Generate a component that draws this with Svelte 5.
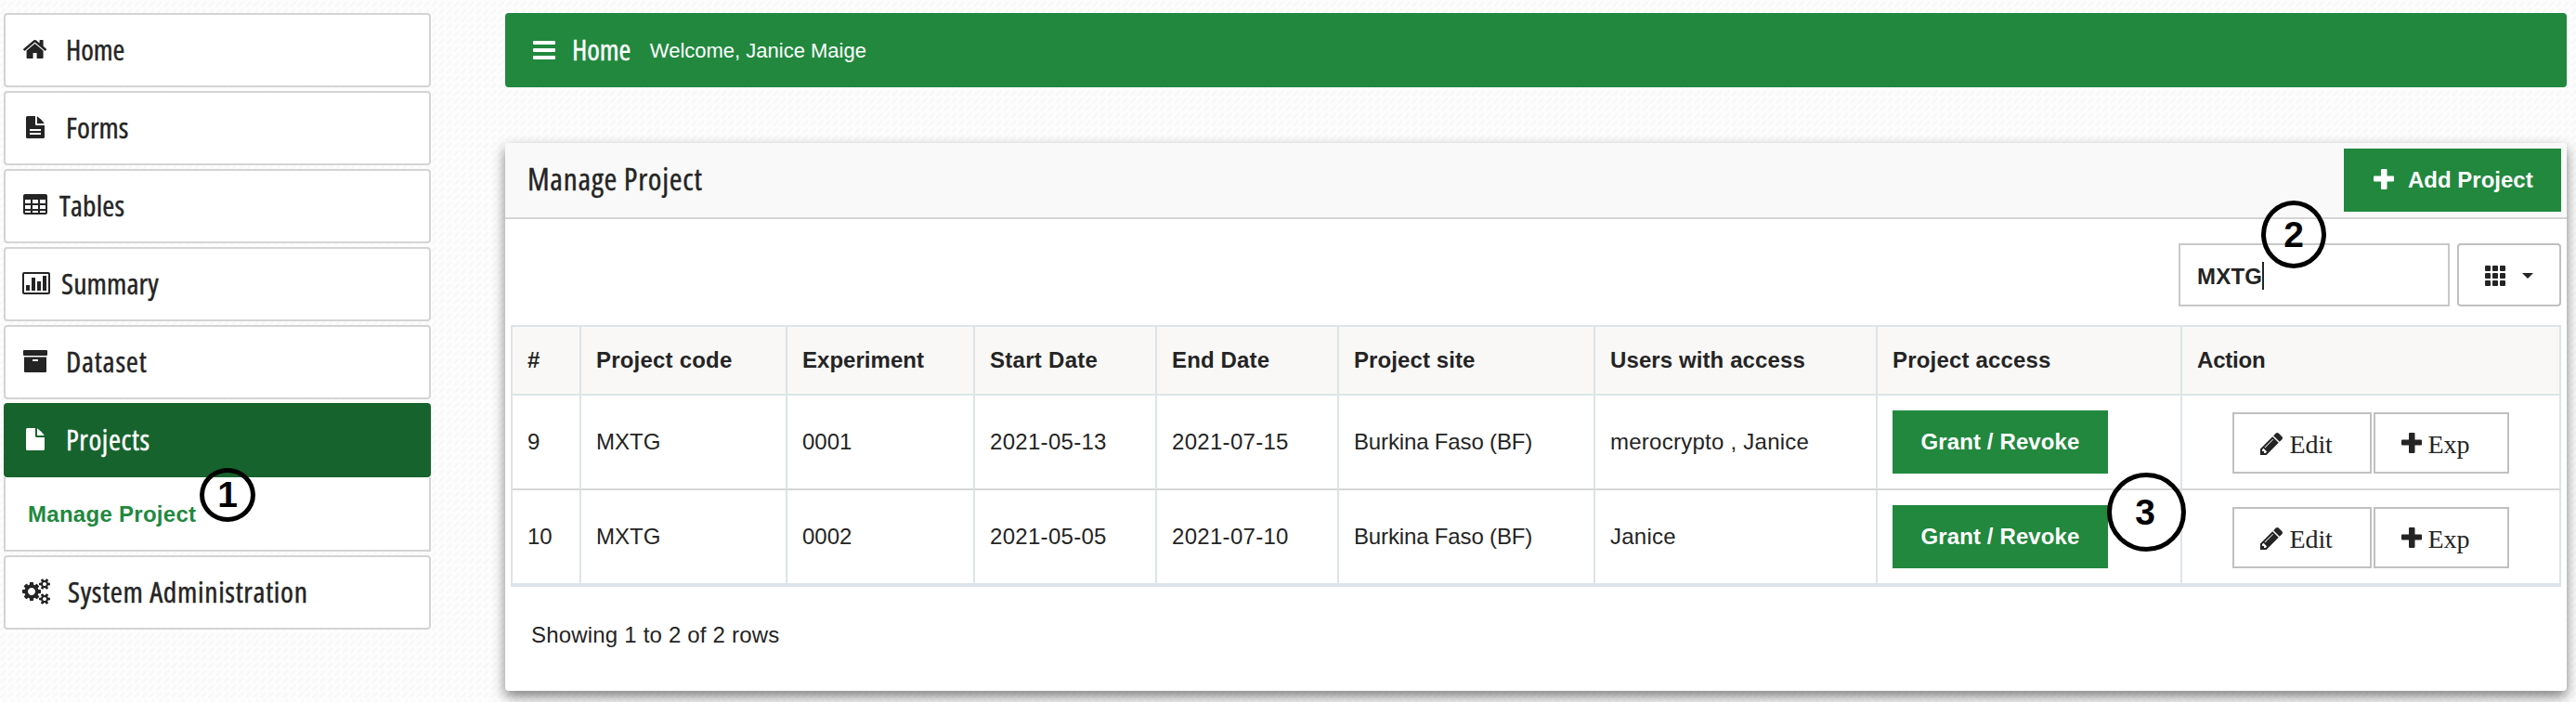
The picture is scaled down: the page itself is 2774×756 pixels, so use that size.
<script>
  const menu = [
    { icon: 'home', label: 'Home', gap: 16.5, scale: 1.03, ls: -0.1 },
    { icon: 'form', label: 'Forms', gap: 16.5, scale: 1.05, ls: 0.1 },
    { icon: 'table', label: 'Tables', gap: 10, scale: 1.045, ls: 0.2 },
    { icon: 'chart', label: 'Summary', gap: 11.5, scale: 1.057, ls: 0.1 },
    { icon: 'archive', label: 'Dataset', gap: 16.5, scale: 1.06, ls: 0.7 },
    { icon: 'file', label: 'Projects', gap: 16.5, scale: 1.05, ls: 0.55 },
    { icon: 'cogs', label: 'System Administration', gap: 19, scale: 1.058, ls: 0.6 }
  ];
  const active = 'Projects';

  const columns = [
    { label: '#', width: 74, ls: 0 },
    { label: 'Project code', width: 222, ls: 0.2 },
    { label: 'Experiment', width: 202, ls: 0.03 },
    { label: 'Start Date', width: 196, ls: 0.28 },
    { label: 'End Date', width: 196, ls: 0.15 },
    { label: 'Project site', width: 276, ls: 0.09 },
    { label: 'Users with access', width: 304, ls: 0.1 },
    { label: 'Project access', width: 328, ls: 0.18 },
    { label: 'Action', width: 408, ls: -0.2 }
  ];

  const rows = [
    { id: '9', code: 'MXTG', exp: '0001', start: '2021-05-13', end: '2021-07-15', site: 'Burkina Faso (BF)', users: 'merocrypto , Janice' },
    { id: '10', code: 'MXTG', exp: '0002', start: '2021-05-05', end: '2021-07-10', site: 'Burkina Faso (BF)', users: 'Janice' }
  ];
</script>

{#snippet plus()}
  <svg class="icon" width="22" height="22" viewBox="0 0 22 22"><path fill="currentColor" d="M9 0h4.500q1 0 1 1v6.500H21q1 0 1 1v4q0 1-1 1h-6.500V21q0 1-1 1H9q-1 0-1-1v-7.500H1q-1 0-1-1v-4q0-1 1-1h7V1q0-1 1-1z" /></svg>
{/snippet}

{#snippet pencil()}
  <svg class="icon" width="24" height="24" viewBox="128 149 1515 1515"><path fill="currentColor" d="M491 1536l91-91-235-235-91 91v107h128v128h107zm523-928q0-22-22-22-10 0-17 7l-542 542q-7 7-7 17 0 22 22 22 10 0 17-7l542-542q7-7 7-17zm-54-192l416 416-832 832h-416v-416zm683 96q0 53-37 90l-166 166-416-416 166-165q36-38 90-38 53 0 91 38l235 234q37 39 37 91z" /></svg>
{/snippet}

{#snippet menuIcon(name)}
  <svg class="icon" width="30" height="30" viewBox="0 0 30 30" fill="currentColor">
    {#if name === 'home'}
      <g transform="translate(0.600 1) scale(0.01562)"><path d="M1408 992v480q0 26-19 45t-45 19h-384v-384h-256v384h-384q-26 0-45-19t-19-45v-480q0-1 .5-3t.5-3l575-474 575 474q1 2 1 6zm223-69l-62 74q-8 9-21 11h-3q-13 0-21-7l-692-577-692 577q-12 8-24 7-13-2-21-11l-62-74q-8-10-7-23.500t11-21.500l719-599q32-26 76-26t76 26l244 204v-195q0-14 9-23t23-9h192q14 0 23 9t9 23v408l219 182q10 8 11 21.500t-7 23.500z" /></g>
    {:else if name === 'form'}
      <path d="M5.500 3H14v8.500q0 1.500 1.500 1.500H24v12.500q0 1.500-1.500 1.500h-17q-1.500 0-1.500-1.500v-21Q4 3 5.500 3zM8 17v2h12v-2zm0 4v2h12v-2z" fill-rule="evenodd" /><path d="M16 3.200q4.500 3 7.800 7.800H16z" />
    {:else if name === 'table'}
      <path fill-rule="evenodd" d="M3 3h22q2 0 2 2v18q0 2-2 2H3q-2 0-2-2V5q0-2 2-2zM3 9v4h6V9zm8 0v4h6V9zm8 0v4h6V9zM3 15v4h6v-4zm8 0v4h6v-4zm8 0v4h6v-4zM3 21v2h6v-2zm8 0v2h6v-2zm8 0v2h6v-2z" />
    {:else if name === 'chart'}
      <path fill-rule="evenodd" d="M2 3h26q2 0 2 2v20q0 2-2 2H2q-2 0-2-2V5q0-2 2-2zm0 2v20h26V5z" /><path d="M4 17h4v6H4zM10 9h4v14h-4zM16 13h4v10h-4zM22 7h4v16h-4z" />
    {:else if name === 'archive'}
      <path fill-rule="evenodd" d="M2 3h24q1 0 1 1v4q0 1-1 1H2q-1 0-1-1V4q0-1 1-1zM2 10.500h24V26q0 1-1 1H3q-1 0-1-1zm9.500 2.500q-.5 0-.5.7v.6q0 .7.500.7h5q.5 0 .5-.7v-.6q0-.7-.5-.7z" />
    {:else if name === 'file'}
      <path d="M5.500 3H14v8.500q0 1.500 1.500 1.500H24v12.500q0 1.500-1.500 1.500h-17q-1.500 0-1.500-1.500v-21Q4 3 5.500 3z" /><path d="M16 3.200q4.500 3 7.800 7.800H16z" />
    {:else}
      <g transform="translate(0 1) scale(0.01562)"><path d="M896 896q0-106-75-181t-181-75-181 75-75 181 75 181 181 75 181-75 75-181zm768 512q0-52-38-90t-90-38-90 38-38 90q0 53 37.500 90.500t90.500 37.500 90.500-37.500 37.500-90.500zm0-1024q0-52-38-90t-90-38-90 38-38 90q0 53 37.500 90.500t90.500 37.500 90.500-37.500 37.500-90.500zm-384 421v185q0 10-7 19.500t-16 10.500l-155 24q-11 35-32 76 34 48 90 115 7 11 7 20 0 12-7 19-23 30-82.500 89.500t-78.500 59.500q-11 0-21-7l-115-90q-37 19-77 31-11 108-23 155-7 24-30 24h-186q-11 0-20-7.500t-10-17.500l-23-153q-34-10-75-31l-118 89q-7 7-20 7-11 0-21-8-144-133-144-160 0-9 7-19 10-14 41-53t47-61q-23-44-35-82l-152-24q-10-1-17-9.500t-7-19.500v-185q0-10 7-19.500t16-10.500l155-24q11-35 32-76-34-48-90-115-7-11-7-20 0-12 7-20 22-30 82-89t79-59q11 0 21 7l115 90q34-18 77-32 11-108 23-154 7-24 30-24h186q11 0 20 7.500t10 17.500l23 153q34 10 75 31l118-89q8-7 20-7 11 0 21 8 144 133 144 160 0 8-7 19-12 16-42 54t-45 60q23 48 34 82l152 23q10 2 17 10.500t7 19.500zm640 533v140q0 16-149 31-12 27-30 52 51 113 51 138 0 4-4 7-122 71-124 71-8 0-46-47t-52-68q-20 2-30 2t-30-2q-14 21-52 68t-46 47q-2 0-124-71-4-3-4-7 0-25 51-138-18-25-30-52-149-15-149-31v-140q0-16 149-31 13-29 30-52-51-113-51-138 0-4 4-7 4-2 35-20t59-34 30-16q8 0 46 46.500t52 67.500q20-2 30-2t30 2q51-71 92-112l6-2q4 0 124 70 4 3 4 7 0 25-51 138 17 23 30 52 149 15 149 31zm0-1024v140q0 16-149 31-12 27-30 52 51 113 51 138 0 4-4 7-122 71-124 71-8 0-46-47t-52-68q-20 2-30 2t-30-2q-14 21-52 68t-46 47q-2 0-124-71-4-3-4-7 0-25 51-138-18-25-30-52-149-15-149-31v-140q0-16 149-31 13-29 30-52-51-113-51-138 0-4 4-7 4-2 35-20t59-34 30-16q8 0 46 46.500t52 67.500q20-2 30-2t30 2q51-71 92-112l6-2q4 0 124 70 4 3 4 7 0 25-51 138 17 23 30 52 149 15 149 31z" /></g>
    {/if}
  </svg>
{/snippet}

<div class="page">
  <nav class="sidebar">
    {#each menu as item}
      <div class="entry">
        <a class="item" class:active={item.label === active}>
          {@render menuIcon(item.icon)}
          <span class="label" style="margin-left:{item.gap}px;transform:scaleX({item.scale});letter-spacing:{item.ls}px">{item.label}</span>
        </a>
        {#if item.label === active}
          <div class="submenu">
            <span class="current">Manage Project</span>
            <div class="step one"><b>1</b></div>
          </div>
        {/if}
      </div>
    {/each}
  </nav>

  <main>
    <header class="topbar">
      <svg class="icon" width="24" height="20" viewBox="0 0 24 20" fill="#fff"><rect width="24" height="4" rx="1" /><rect y="8" width="24" height="4" rx="1" /><rect y="16" width="24" height="4" rx="1" /></svg>
      <span class="crumb">Home</span>
      <span class="welcome">Welcome, Janice Maige</span>
    </header>

    <section class="panel">
      <div class="panel-head">
        <h1>Manage Project</h1>
        <button class="green add">{@render plus()}<span>Add Project</span></button>
      </div>

      <div class="tools">
        <div class="search"><span>MXTG</span><i class="cursor"></i><div class="step two"><b>2</b></div></div>
        <button class="cols" aria-label="Columns">
          <svg class="icon" width="22" height="22" viewBox="0 0 22 22" fill="currentColor">
            {#each [0, 8, 16] as y}{#each [0, 8, 16] as x}<rect {x} {y} width="6" height="6" rx="1" />{/each}{/each}
          </svg>
          <svg class="icon" width="12" height="6" viewBox="0 0 12 6"><path fill="currentColor" d="M0 0h12L6 6z" /></svg>
        </button>
      </div>

      <table>
        <colgroup>{#each columns as c}<col style="width:{c.width}px" />{/each}</colgroup>
        <thead>
          <tr>{#each columns as c}<th style="letter-spacing:{c.ls}px">{c.label}</th>{/each}</tr>
        </thead>
        <tbody>
          {#each rows as r, i}
            <tr>
              <td>{r.id}</td>
              <td>{r.code}</td>
              <td>{r.exp}</td>
              <td class="date">{r.start}</td>
              <td class="date">{r.end}</td>
              <td class="site">{r.site}</td>
              <td class="users">{r.users}</td>
              <td class="controls">
                <div class="access">
                  <button class="green grant">Grant / Revoke</button>
                  {#if i === 1}<div class="step three"><b>3</b></div>{/if}
                </div>
              </td>
              <td class="controls">
                <div class="actions">
                  <button class="act edit">{@render pencil()}<span>Edit</span></button>
                  <button class="act exp">{@render plus()}<span>Exp</span></button>
                </div>
              </td>
            </tr>
          {/each}
        </tbody>
      </table>

      <p class="count">Showing 1 to 2 of 2 rows</p>
    </section>
  </main>
</div>

<style>
  :global(body) { margin: 0; }
  .page, .page * { box-sizing: border-box; }
  .page {
    display: flex;
    align-items: flex-start;
    gap: 80px;
    width: 2774px;
    height: 756px;
    padding: 14px 10px 0 4px;
    overflow: hidden;
    color: #242424;
    font: 24px/27px "Liberation Sans", Arial, sans-serif;
    background: #fdfdfd url("data:image/svg+xml,%3Csvg xmlns='http://www.w3.org/2000/svg' width='8' height='8'%3E%3Cpath d='M1.500 6.500l4-4' stroke='%23f8f8f8' stroke-width='2.500' stroke-linecap='round'/%3E%3C/svg%3E");
  }
  .icon { display: block; flex: none; }
  button { margin: 0; padding: 0; color: inherit; font: inherit; }

  .sidebar { display: flex; flex-direction: column; gap: 4px; width: 460px; flex: none; }
  .item {
    display: flex;
    align-items: center;
    height: 80px;
    padding-left: 18px;
    border: 2px solid #d4d4d4;
    border-radius: 4px;
    background: #fff;
  }
  .item.active { border-color: #16632d; background: #16632d; color: #fff; }
  .label, .crumb, h1 {
    font-family: "Open Sans", "Noto Sans", sans-serif;
    font-size: 30px;
    font-stretch: 75%;
    font-weight: 400;
    line-height: 40px;
    white-space: nowrap;
    transform-origin: left center;
    -webkit-text-stroke: 0.4px currentColor;
  }
  .item .icon { margin-top: -2px; }
  .submenu {
    position: relative;
    display: flex;
    align-items: center;
    height: 80px;
    padding-left: 24px;
    border: 2px solid #d4d4d4;
    border-top: 0;
    background: #fff;
  }
  .current { color: #21883e; font-weight: 700; letter-spacing: 0.28px; }

  main { display: flex; flex-direction: column; gap: 60px; width: 2220px; flex: none; }
  .topbar { display: flex; align-items: center; height: 80px; padding-left: 30px; border-radius: 4px; background: #21883e; color: #fff; }
  .crumb { margin-left: 17.500px; letter-spacing: -0.1px; transform: scaleX(1.03); }
  .welcome { margin-left: 23px; font-size: 22px; }

  .panel { height: 590px; border-radius: 4px; background: #fff; box-shadow: 0 6px 14px rgba(0, 0, 0, 0.5); }
  .panel-head {
    display: flex;
    align-items: center;
    justify-content: space-between;
    height: 82px;
    padding: 0 6px 0 23.500px;
    border-bottom: 2px solid #d4d4d4;
    border-radius: 4px 4px 0 0;
    background: #f9f9f9;
  }
  h1 { margin: -2px 0 0; font-size: 32px; letter-spacing: 0.7px; transform: scaleX(1.04); }
  .green { border: 0; background: #21883e; color: #fff; font-weight: 700; }
  .add { display: flex; align-items: center; gap: 15px; width: 234px; height: 68px; padding: 0 0 2px 32px; }

  .tools { display: flex; justify-content: flex-end; gap: 8px; height: 114px; padding: 26px 6px 0 0; }
  .search { position: relative; display: flex; align-items: center; width: 292px; height: 68px; padding-left: 18px; border: 2px solid #c8c8c8; background: #fff; font-weight: 700; letter-spacing: 0.2px; }
  .search span { padding-top: 3px; }
  .cursor { width: 2px; height: 30px; margin-top: 2px; background: #242424; }
  .cols { display: flex; align-items: center; gap: 18px; width: 112px; height: 68px; padding: 2px 0 0 28px; border: 2px solid #c0c0c0; border-radius: 4px; background: #fff; }

  table { width: 2208px; margin-left: 6px; border-collapse: separate; border-spacing: 0; table-layout: fixed; border-left: 2px solid #dce4e7; }
  th, td { padding: 0 0 1px 16px; border-right: 2px solid #dce4e7; text-align: left; vertical-align: middle; white-space: nowrap; }
  th { height: 76px; border-top: 2px solid #dce4e7; border-bottom: 2px solid #dce4e7; background: #f9f8f7; }
  td { height: 102px; border-bottom: 2px solid #d6d6d6; }
  td.controls { padding-bottom: 0; }
  tbody tr:last-child td { height: 104px; border-bottom: 4px solid #dde4e9; }
  .date { letter-spacing: 0.3px; }
  .site { letter-spacing: -0.15px; }
  .users { letter-spacing: 0.25px; }
  .access { position: relative; display: flex; }
  .grant { width: 232px; height: 68px; padding-bottom: 1px; letter-spacing: 0.12px; }
  .actions { display: flex; gap: 2px; padding: 2px 0 0 38px; }
  .act { display: flex; align-items: center; height: 66px; padding: 2px 0 0 28px; border: 2px solid #c0c0c0; background: #fff; font: 28px/31px "Liberation Serif", "Times New Roman", serif; }
  .edit { width: 150px; gap: 7.500px; letter-spacing: -0.1px; }
  .exp { width: 146px; gap: 6.500px; letter-spacing: 0; }
  .exp :global(.icon) { margin-top: -2px; }
  .count { margin: 0; padding: 38px 0 0 28px; letter-spacing: 0.19px; }

  .step { position: absolute; display: flex; align-items: center; justify-content: center; border: 5px solid #000; border-radius: 50%; color: #000; font-size: 39px; line-height: 44px; font-weight: 700; letter-spacing: 0; }
  .one { left: 209px; top: -10px; width: 60px; height: 58px; }
  .two { left: 87px; top: -48px; width: 70px; height: 73px; }
  .three { left: 231px; top: -35px; width: 85px; height: 85px; padding-right: 3px; }
</style>
